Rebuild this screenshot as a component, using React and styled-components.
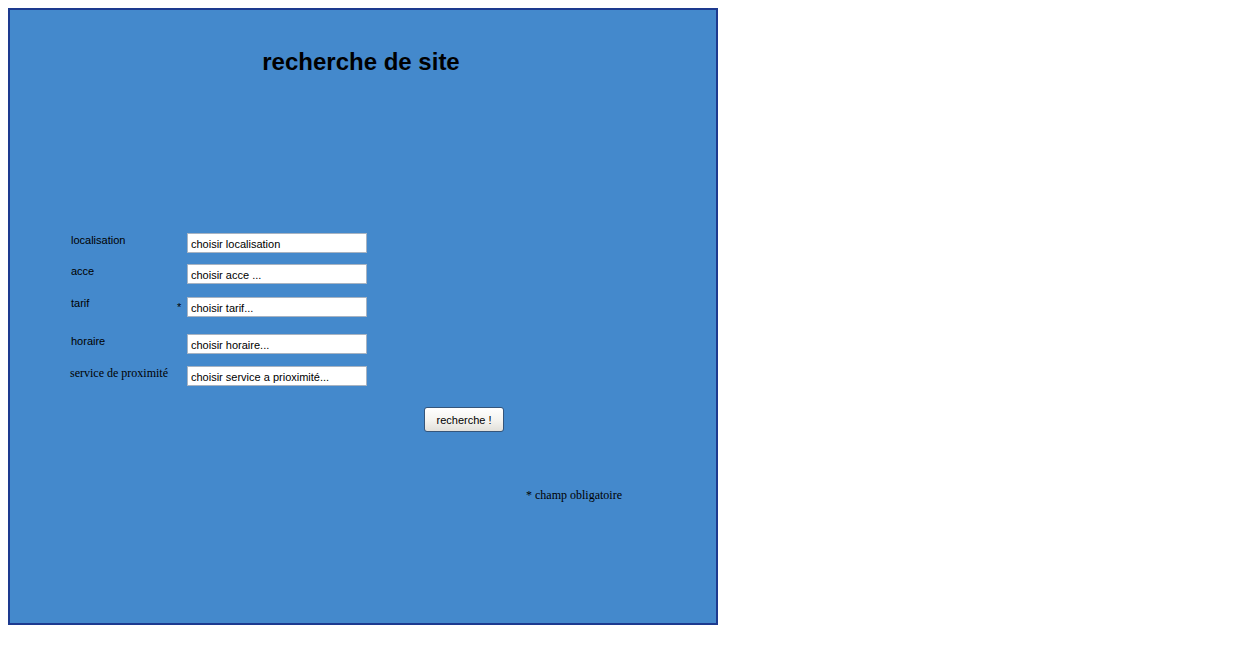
import React from "react";
import styled, { createGlobalStyle } from "styled-components";

const fields = [
  { label: "localisation", value: "choisir localisation", gap: 0, labelTop: 1 },
  { label: "acce", value: "choisir acce ...", gap: 11, labelTop: 1 },
  { label: "tarif", value: "choisir tarif...", gap: 13, labelTop: 0, required: true },
  { label: "horaire", value: "choisir horaire...", gap: 17, labelTop: 1 },
  { label: "service de proximité", value: "choisir service a prioximité...", gap: 12, labelTop: 0, serif: true },
];

const GlobalStyle = createGlobalStyle`
  body {
    margin: 8px;
    background: #ffffff;
    font-family: "Liberation Sans", Arial, sans-serif;
  }
`;

const Panel = styled.div`
  width: 706px;
  height: 613px;
  background-color: #4489cc;
  border: 2px solid #1d3a8f;
  display: flex;
  flex-direction: column;
`;

const Title = styled.h1`
  margin: 38px 0 0;
  font-family: "Liberation Sans", Arial, sans-serif;
  font-size: 24px;
  font-weight: bold;
  color: #000;
  text-align: center;
  padding-right: 4px;
`;

const Form = styled.form`
  margin-top: 157px;
  padding-left: 61px;
  display: flex;
  flex-direction: column;
`;

const Row = styled.div`
  display: grid;
  grid-template-columns: 106px 10px 180px;
  grid-template-rows: 20px;
  align-items: start;
  margin-top: ${(p) => p.$gap}px;
`;

const Label = styled.label`
  padding-top: ${(p) => p.$top}px;
  font-family: ${(p) =>
    p.$serif ? `"Liberation Serif", "Times New Roman", serif` : `"Liberation Sans", Arial, sans-serif`};
  font-size: ${(p) => (p.$serif ? "12px" : "11px")};
  color: #000;
  white-space: nowrap;
  margin-left: ${(p) => (p.$serif ? "-1px" : "0")};
`;

const Star = styled.span`
  font-size: 11px;
  line-height: 20px;
  color: #000;
`;

const Input = styled.input`
  box-sizing: border-box;
  width: 180px;
  height: 20px;
  margin: 0;
  padding: 2px 3px 0;
  border: 1px solid #a7b3c2;
  background: #ffffff;
  font-family: "Liberation Sans", Arial, sans-serif;
  font-size: 11px;
  color: #000;
  outline: none;
`;

const ButtonRow = styled.div`
  margin-top: 21px;
  padding-left: 353px;
`;

const Button = styled.button`
  box-sizing: border-box;
  width: 80px;
  height: 25px;
  border: 1px solid #35557a;
  border-radius: 3px;
  background: linear-gradient(#ffffff 0%, #f4f3ef 55%, #e2e0da 100%);
  font-family: "Liberation Sans", Arial, sans-serif;
  font-size: 11px;
  color: #000;
  padding: 0;
`;

const Note = styled.p`
  margin: 56px 0 0;
  padding-left: 516px;
  font-family: "Liberation Serif", "Times New Roman", serif;
  font-size: 12px;
  color: #000;
`;

export default function App() {
  return (
    <>
      <GlobalStyle />
      <Panel>
        <Title>recherche de site</Title>
        <Form onSubmit={(e) => e.preventDefault()}>
          {fields.map((f) => (
            <Row key={f.label} $gap={f.gap}>
              <Label $top={f.labelTop} $serif={f.serif}>
                {f.label}
              </Label>
              <Star>{f.required ? "*" : ""}</Star>
              <Input defaultValue={f.value} />
            </Row>
          ))}
          <ButtonRow>
            <Button type="submit">recherche !</Button>
          </ButtonRow>
        </Form>
        <Note>* champ obligatoire</Note>
      </Panel>
    </>
  );
}
